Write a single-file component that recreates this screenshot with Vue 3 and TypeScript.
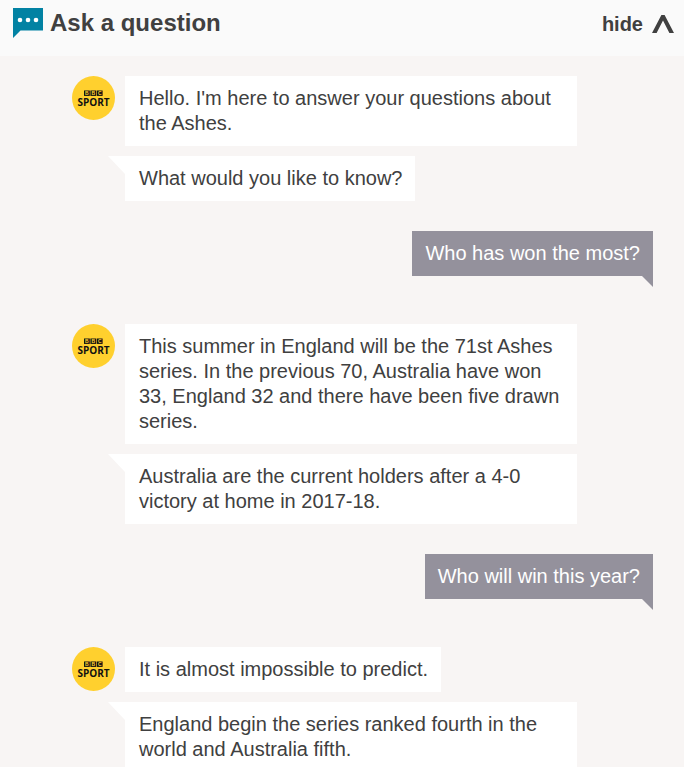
<script setup lang="ts">
import { ref } from 'vue'

interface Turn {
  from: 'bot' | 'user'
  messages: string[]
}

const open = ref<boolean>(true)

const turns: Turn[] = [
  {
    from: 'bot',
    messages: [
      "Hello. I'm here to answer your questions about the Ashes.",
      'What would you like to know?',
    ],
  },
  { from: 'user', messages: ['Who has won the most?'] },
  {
    from: 'bot',
    messages: [
      'This summer in England will be the 71st Ashes series. In the previous 70, Australia have won 33, England 32 and there have been five drawn series.',
      'Australia are the current holders after a 4-0 victory at home in 2017-18.',
    ],
  },
  { from: 'user', messages: ['Who will win this year?'] },
  {
    from: 'bot',
    messages: [
      'It is almost impossible to predict.',
      'England begin the series ranked fourth in the world and Australia fifth.',
    ],
  },
]
</script>

<template>
  <section class="chat">
    <header class="header">
      <h1 class="title">
        <svg class="title-icon" width="30" height="30" viewBox="0 0 30 30" aria-hidden="true">
          <path d="M0 0H30V22.5H7.5L0 30Z" fill="#0282a3" />
          <circle cx="7" cy="12" r="2.3" fill="#fff" />
          <circle cx="15" cy="12" r="2.3" fill="#fff" />
          <circle cx="23" cy="12" r="2.3" fill="#fff" />
        </svg>
        Ask a question
      </h1>
      <button class="toggle" type="button" :aria-expanded="open" @click="open = !open">
        hide
        <svg width="22" height="18" viewBox="0 0 22 18" aria-hidden="true">
          <path d="M0 18L9.4 0H12.6L22 18H17.4L11 5.6L4.6 18Z" fill="#404040" />
        </svg>
      </button>
    </header>

    <ol v-if="open" class="conversation">
      <li v-for="(turn, i) in turns" :key="i" class="turn" :class="turn.from">
        <svg v-if="turn.from === 'bot'" class="avatar" width="43" height="44" viewBox="0 0 43 44">
          <ellipse cx="21.5" cy="22" rx="21.5" ry="22" fill="#ffd02e" />
          <g fill="#111">
            <rect x="12" y="14.5" width="5.8" height="5.4" />
            <rect x="18.4" y="14.5" width="5.8" height="5.4" />
            <rect x="24.8" y="14.5" width="5.8" height="5.4" />
          </g>
          <g class="logo-small" fill="#ffd02e" text-anchor="middle">
            <text x="14.9" y="18.8">B</text>
            <text x="21.3" y="18.8">B</text>
            <text x="27.7" y="18.8">C</text>
          </g>
          <text class="logo-name" x="21.5" y="29.5" text-anchor="middle">SPORT</text>
        </svg>
        <div class="bubbles">
          <p v-for="(message, j) in turn.messages" :key="j" class="bubble">{{ message }}</p>
        </div>
      </li>
    </ol>
  </section>
</template>

<style>
body {
  margin: 0;
  background: #f8f5f4;
}
</style>

<style scoped>
.chat {
  display: flex;
  flex-direction: column;
  height: 100vh;
  color: #404040;
  font-family: "Liberation Sans", Arial, sans-serif;
  font-size: 20px;
  line-height: 25px;
}

.header {
  display: flex;
  flex: none;
  justify-content: space-between;
  align-items: flex-start;
  box-sizing: border-box;
  height: 56px;
  padding: 8px 10px 0 13px;
  background: #fafafa;
}

.title {
  display: flex;
  gap: 7px;
  margin: 0;
  font-size: 24px;
  line-height: 30px;
}

.toggle {
  display: flex;
  align-items: center;
  gap: 9px;
  padding: 0;
  border: 0;
  background: none;
  color: inherit;
  font: inherit;
  font-weight: bold;
  line-height: 32px;
  cursor: pointer;
}

.conversation {
  flex: 1;
  min-height: 0;
  margin: 0;
  padding: 20px 31px 20px 72px;
  overflow-y: auto;
  scrollbar-width: none;
  list-style: none;
}

.turn {
  display: flex;
}

.bot {
  gap: 10px;
  padding-right: 76px;
}

.user {
  justify-content: flex-end;
  margin: 30px 0 48px;
}

.avatar {
  flex: none;
}

.logo-small {
  font: bold 5px "Liberation Sans", sans-serif;
}

.logo-name {
  fill: #111;
  font: bold 10px "Open Sans", sans-serif;
}

.bubbles {
  display: flex;
  flex-direction: column;
  align-items: flex-start;
  gap: 10px;
}

.bubble {
  position: relative;
  margin: 0;
  padding: 10px 13px;
  background: #fff;
}

.bot .bubble {
  padding-left: 14px;
}

.bot .bubble + .bubble::before {
  content: "";
  position: absolute;
  top: 0;
  right: 100%;
  width: 17px;
  height: 18px;
  background: #fff;
  clip-path: polygon(0 0, 100% 0, 100% 100%);
}

.user .bubble {
  background: #94919c;
  color: #fff;
}

.user .bubble::after {
  content: "";
  position: absolute;
  top: 100%;
  right: 0;
  width: 11px;
  height: 11px;
  background: #94919c;
  clip-path: polygon(0 0, 100% 0, 100% 100%);
}
</style>
